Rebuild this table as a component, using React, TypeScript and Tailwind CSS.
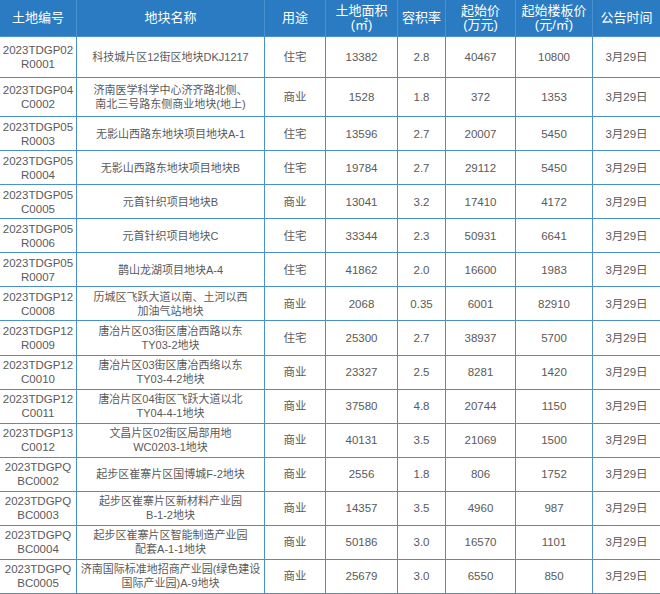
const headers = [
  ["土地编号"],
  ["地块名称"],
  ["用途"],
  ["土地面积", "(㎡)"],
  ["容积率"],
  ["起始价", "(万元)"],
  ["起始楼板价", "(元/㎡)"],
  ["公告时间"],
];

type Row = [string, string, string[], string, string, string, string, string];

const rows: Row[] = [
  ["2023TDGP02", "R0001", ["科技城片区12街区地块DKJ1217"], "住宅", "13382", "2.8", "40467", "10800"],
  ["2023TDGP04", "C0002", ["济南医学科学中心济齐路北侧、", "南北三号路东侧商业地块(地上)"], "商业", "1528", "1.8", "372", "1353"],
  ["2023TDGP05", "R0003", ["无影山西路东地块项目地块A-1"], "住宅", "13596", "2.7", "20007", "5450"],
  ["2023TDGP05", "R0004", ["无影山西路东地块项目地块B"], "住宅", "19784", "2.7", "29112", "5450"],
  ["2023TDGP05", "C0005", ["元首针织项目地块B"], "商业", "13041", "3.2", "17410", "4172"],
  ["2023TDGP05", "R0006", ["元首针织项目地块C"], "住宅", "33344", "2.3", "50931", "6641"],
  ["2023TDGP05", "R0007", ["鹊山龙湖项目地块A-4"], "住宅", "41862", "2.0", "16600", "1983"],
  ["2023TDGP12", "C0008", ["历城区飞跃大道以南、土河以西", "加油气站地块"], "商业", "2068", "0.35", "6001", "82910"],
  ["2023TDGP12", "R0009", ["唐冶片区03街区唐冶西路以东", "TY03-2地块"], "住宅", "25300", "2.7", "38937", "5700"],
  ["2023TDGP12", "C0010", ["唐冶片区03街区唐冶西络以东", "TY03-4-2地块"], "商业", "23327", "2.5", "8281", "1420"],
  ["2023TDGP12", "C0011", ["唐冶片区04街区飞跃大道以北", "TY04-4-1地块"], "商业", "37580", "4.8", "20744", "1150"],
  ["2023TDGP13", "C0012", ["文昌片区02街区局部用地", "WC0203-1地块"], "商业", "40131", "3.5", "21069", "1500"],
  ["2023TDGPQ", "BC0002", ["起步区崔寨片区国博城F-2地块"], "商业", "2556", "1.8", "806", "1752"],
  ["2023TDGPQ", "BC0003", ["起步区崔寨片区新材料产业园", "B-1-2地块"], "商业", "14357", "3.5", "4960", "987"],
  ["2023TDGPQ", "BC0004", ["起步区崔寨片区智能制造产业园", "配套A-1-1地块"], "商业", "50186", "3.0", "16570", "1101"],
  ["2023TDGPQ", "BC0005", ["济南国际标准地招商产业园(绿色建设", "国际产业园)A-9地块"], "商业", "25679", "3.0", "6550", "850"],
];

const Cell = ({ lines, className = "" }: { lines: string[]; className?: string }) => (
  <div className={`bg-white flex flex-col items-center justify-center text-center leading-[14px] whitespace-nowrap ${className}`}>
    {lines.map((l, i) => (
      <div key={i}>{l}</div>
    ))}
  </div>
);

const App = () => {
  return (
    <div
      className="w-[660px] h-[594px] bg-[#4a90cf] border-b border-[#4a90cf] grid grid-cols-[76px_187px_60px_71px_47px_69px_76px_67px] grid-rows-[36px_40px_38px_repeat(14,1fr)] gap-px text-[#5a5a5a] text-[11.5px] overflow-hidden"
      style={{ fontFamily: '"Liberation Sans", "Noto Sans CJK SC", sans-serif' }}
    >
      {headers.map((h, i) => (
        <div key={i} className="bg-[#2a7bc2] text-white text-[13px] leading-[14px] flex flex-col items-center justify-center text-center whitespace-nowrap">
          {h.map((l, j) => (
            <div key={j}>{l}</div>
          ))}
        </div>
      ))}
      {rows.map((r, i) => (
        <div key={i} className="contents">
          <Cell lines={[r[0], r[1]]} className="leading-[13px]" />
          <Cell lines={r[2]} className="text-[11px]" />
          <Cell lines={[r[3]]} />
          <Cell lines={[r[4]]} />
          <Cell lines={[r[5]]} />
          <Cell lines={[r[6]]} />
          <Cell lines={[r[7]]} />
          <Cell lines={["3月29日"]} />
        </div>
      ))}
    </div>
  );
};

export default App;
